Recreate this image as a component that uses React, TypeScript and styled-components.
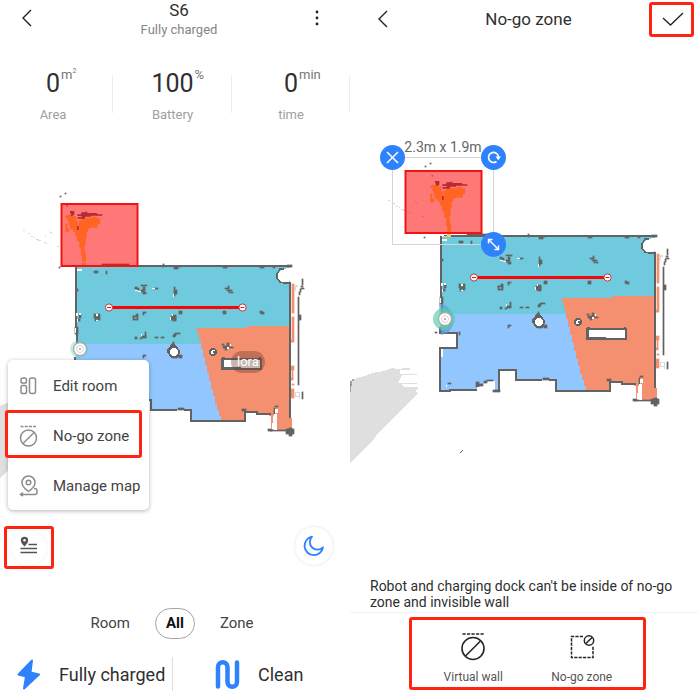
import React from "react";
import styled, { createGlobalStyle, css } from "styled-components";

const GlobalStyle = createGlobalStyle`
  *, *::before, *::after { box-sizing: border-box; }
  body {
    margin: 0;
    background: #fff;
    color: #2f2f2f;
    font-family: Roboto, "Liberation Sans", sans-serif;
  }
  button { font: inherit; color: inherit; border: 0; padding: 0; margin: 0; background: none; cursor: pointer; }
  h1, p, dl, dd, dt { margin: 0; }
  svg { display: block; }
`;

const RED = "#ff2412";
const BLUE = "#2e82fb";

const Screens = styled.main`
  display: grid;
  grid-template-columns: minmax(0, 350fr) minmax(0, 348fr);
  min-height: 100vh;
`;

const Screen = styled.section`
  display: flex;
  flex-direction: column;
  min-width: 0;
`;

const Header = styled.header`
  display: grid;
  align-items: center;
  height: 40px;
  flex: none;
`;

const HomeHeader = styled(Header)`
  grid-template-columns: 54px 1fr 54px;
  padding-right: 6px;
`;

const ConfirmHeader = styled(Header)`
  grid-template-columns: 66px 1fr 45px;
  padding-right: 4px;
  padding-bottom: 2px;
`;

const IconButton = styled.button`
  display: flex;
  align-items: center;
  justify-content: center;
  height: 36px;
`;

const HomeIconButton = styled(IconButton)`
  padding-bottom: 4px;
`;

const TitleBlock = styled.div`
  padding-left: 14px;
  text-align: center;
`;

const Title = styled.h1<{ $inset?: boolean }>`
  font-size: 17px;
  font-weight: 400;
  line-height: 20px;
  text-align: center;
  padding-right: ${(p) => (p.$inset ? 8 : 0)}px;
`;

const Subtitle = styled.p`
  font-size: 13px;
  line-height: 20px;
  color: #858585;
`;

const redFrame = css`
  border: 3px solid ${RED};
  border-radius: 3px;
`;

const ConfirmButton = styled.button`
  ${redFrame}
  display: flex;
  align-items: center;
  justify-content: center;
  width: 45px;
  height: 35px;
  padding-left: 3px;
`;

const Stats = styled.dl`
  display: grid;
  grid-template-columns: 113fr 119fr 118fr;
  margin-top: 28px;
  flex: none;
`;

const Stat = styled.div<{ $first?: boolean }>`
  display: flex;
  flex-direction: column-reverse;
  align-items: center;
  padding-right: ${(p) => (p.$first ? 7 : 0)}px;
  background: linear-gradient(#ececec, #ececec) right 7px / 1px 38px no-repeat;
`;

const StatLabel = styled.dt`
  font-size: 13px;
  line-height: 16px;
  margin-top: 8px;
  color: #a0a0a0;
`;

const StatValue = styled.dd`
  position: relative;
  font-size: 25px;
  line-height: 31px;
`;

const Unit = styled.sup`
  position: absolute;
  left: 100%;
  top: 0;
  padding-left: 1px;
  font-size: 13px;
  line-height: 13px;
  color: #777;
  sup { font-size: 7px; line-height: 1; vertical-align: 6px; }
`;

const Stage = styled.div`
  position: relative;
  flex: 1;
`;

const MapSvg = styled.svg`
  width: 100%;
  height: auto;
`;

const Menu = styled.ul`
  position: absolute;
  left: 8px;
  bottom: 82px;
  width: 141px;
  margin: 0;
  padding: 0;
  list-style: none;
  background: #fff;
  border-radius: 5px;
  box-shadow: 0 1px 4px rgba(0, 0, 0, 0.3);
`;

const MenuItem = styled.li<{ $marked?: boolean }>`
  position: relative;
  & + &::before {
    content: "";
    position: absolute;
    top: 0;
    left: 14px;
    right: 0;
    height: 1px;
    background: #ececec;
  }
  ${(p) =>
    p.$marked &&
    css`
      &::after {
        content: "";
        position: absolute;
        inset: 0 7px 2px -3px;
        ${redFrame}
        pointer-events: none;
      }
    `}
`;

const MenuButton = styled.button`
  display: flex;
  align-items: center;
  gap: 14px;
  width: 100%;
  height: 50px;
  padding: 1px 0 0 10px;
  font-size: 15px;
  color: #444;
  white-space: nowrap;
`;

const LayersMark = styled.div`
  ${redFrame}
  position: absolute;
  left: 4px;
  bottom: 23px;
  width: 50px;
  height: 43px;
  display: flex;
  align-items: center;
  justify-content: center;
`;

const RoundButton = styled.button`
  display: flex;
  align-items: center;
  justify-content: center;
  width: 38px;
  height: 38px;
  flex: none;
  border-radius: 50%;
  background: #fff;
  box-shadow: 0 0 3px rgba(0, 0, 0, 0.14);
`;

const LayersButton = styled(RoundButton)`
  width: 36px;
  height: 36px;
  padding-bottom: 6px;
  box-shadow: 0 0 1px rgba(0, 0, 0, 0.14);
`;

const NightButton = styled(RoundButton)`
  position: absolute;
  right: 17px;
  bottom: 27px;
`;

const RoomTag = styled.span`
  position: absolute;
  left: 66%;
  top: 228px;
  padding: 0 6px;
  border-radius: 11px;
  background: rgba(110, 60, 45, 0.38);
  color: #fff;
  font-size: 13px;
  line-height: 22px;
`;

const Tabs = styled.div`
  display: flex;
  justify-content: center;
  align-items: center;
  gap: 25px;
  height: 31px;
  margin-top: 16px;
  padding-right: 6px;
  flex: none;
`;

const Tab = styled.button<{ $active?: boolean }>`
  font-size: 15px;
  line-height: 29px;
  color: #444;
  ${(p) =>
    p.$active &&
    css`
      width: 40px;
      border: 1px solid #a5a5a5;
      border-radius: 16px;
      font-weight: 700;
      color: #111;
    `}
`;

const Actions = styled.div`
  display: grid;
  grid-template-columns: 172fr 178fr;
  height: 34px;
  margin: 18px 0 7px;
  flex: none;
`;

const Action = styled.button<{ $inset: number }>`
  display: flex;
  align-items: center;
  gap: 18px;
  padding-left: ${(p) => p.$inset}px;
  font-size: 18px;
  white-space: nowrap;
  & + & { border-left: 1px solid #ddd; }
`;

const Selection = styled.div`
  position: absolute;
  left: 42px;
  top: 117px;
  width: 102px;
  height: 88px;
  border: 1px solid #d3d5da;
`;

const SelectionSize = styled.span`
  position: absolute;
  left: 0;
  right: 0;
  bottom: 100%;
  padding-bottom: 2px;
  font-size: 14px;
  line-height: 18px;
  text-align: center;
  color: #666;
  white-space: nowrap;
`;

const Handle = styled.button<{ $corner: "close" | "rotate" | "resize" }>`
  position: absolute;
  display: flex;
  align-items: center;
  justify-content: center;
  width: 25px;
  height: 25px;
  border-radius: 50%;
  background: ${BLUE};
  ${(p) => (p.$corner === "close" ? "left: -13px;" : "right: -13px;")}
  ${(p) => (p.$corner === "resize" ? "bottom: -13px;" : "top: -13px;")}
`;

const Note = styled.p`
  padding: 0 20px;
  font-size: 14px;
  line-height: 16px;
  flex: none;
`;

const ToolBar = styled.div`
  margin-top: 2px;
  padding: 4px 52px 8px 59px;
  border-top: 1px solid #f1f1f1;
  flex: none;
`;

const ToolFrame = styled.div`
  ${redFrame}
  display: grid;
  grid-template-columns: 1fr 1fr;
  padding: 0 7px;
  height: 73px;
`;

const Tool = styled.button`
  display: flex;
  flex-direction: column;
  align-items: center;
  gap: 8px;
  padding-top: 12px;
  font-size: 12px;
  line-height: 16px;
  color: #555;
`;

type Box = [number, number, number, number];

const WALL = "#636363";

const wallSpecks: Box[] = [
  [109, 241, 4, 2], [121, 241, 1, 3], [117, 234, 27, 2], [150, 257, 2, 2], [152, 258, 2, 2],
  [156, 255, 6, 1], [158, 257, 2, 4], [156, 260, 3, 2], [158, 262, 3, 2], [170, 258, 3, 1],
  [189, 257, 1, 9], [190, 260, 2, 4], [92, 259, 1, 2], [158, 282, 3, 1], [158, 283, 1, 2],
  [194, 281, 3, 3], [148, 286, 5, 1], [148, 286, 1, 4], [152, 287, 1, 3], [149, 289, 3, 1],
  [151, 284, 2, 2], [186, 286, 5, 4], [188, 285, 3, 6], [109, 284, 2, 4], [110, 287, 3, 2],
  [113, 284, 2, 6], [110, 289, 1, 2], [94, 285, 2, 3], [93, 289, 2, 2], [90, 297, 3, 7],
  [189, 304, 2, 2], [190, 303, 5, 1], [188, 305, 2, 2], [160, 302, 1, 5], [157, 306, 4, 2],
  [155, 308, 2, 1], [150, 307, 2, 2], [170, 307, 3, 1], [176, 307, 3, 1], [188, 312, 1, 5],
  [194, 325, 3, 3], [188, 326, 4, 2], [158, 325, 3, 1], [158, 326, 1, 2], [109, 332, 1, 3],
  [178, 234, 1, 3], [189, 237, 4, 2], [193, 236, 3, 1], [238, 236, 4, 2], [275, 236, 4, 2],
  [288, 236, 2, 2], [302, 235, 5, 2], [240, 258, 4, 1], [243, 256, 1, 3], [242, 260, 5, 1],
  [244, 261, 1, 2], [246, 262, 2, 1], [238, 281, 3, 3], [275, 281, 2, 2], [276, 282, 3, 2],
  [238, 316, 5, 2], [242, 313, 2, 4], [240, 318, 2, 2], [244, 317, 4, 1], [237, 314, 2, 1],
  [313, 267, 1, 88], [314, 285, 2, 5], [317, 249, 1, 6], [316, 256, 2, 1], [315, 259, 1, 3],
  [314, 262, 1, 3], [317, 362, 1, 7], [316, 258, 3, 1], [301, 399, 8, 5], [304, 398, 3, 8],
  [285, 400, 16, 1], [283, 399, 4, 2], [289, 378, 1, 8], [290, 376, 3, 1], [257, 379, 4, 2],
  [126, 382, 3, 5], [129, 384, 4, 2], [134, 381, 3, 2], [137, 380, 6, 1], [143, 390, 7, 2],
  [98, 383, 3, 1], [193, 378, 6, 2], [90, 331, 3, 1], [85, 332, 2, 1], [75, 166, 1, 1],
  [80, 163, 1, 1], [74, 237, 1, 1],
];

const clearSpecks: Box[] = [
  [92, 239, 5, 2], [91, 283, 2, 3], [94, 283, 2, 2], [92, 289, 1, 3], [111, 284, 2, 2],
  [111, 290, 2, 1], [153, 261, 3, 1], [167, 258, 3, 1], [150, 260, 3, 1], [188, 264, 1, 3],
  [187, 284, 1, 2], [185, 287, 1, 3], [156, 304, 1, 2], [91, 349, 2, 8], [96, 385, 1, 2],
  [289, 384, 3, 16], [287, 396, 3, 3], [290, 379, 3, 4], [242, 317, 2, 2], [245, 314, 1, 2],
  [90, 298, 1, 5], [127, 387, 6, 4], [134, 384, 8, 6],
];

const roomSlivers: Box[] = [
  [307, 254, 2, 29], [307, 287, 2, 25], [305, 310, 3, 2], [306, 336, 3, 4], [307, 340, 1, 9],
  [306, 348, 2, 2], [307, 354, 2, 1], [305, 359, 4, 9],
];

const lightSpecks: Box[] = [
  [309, 255, 4, 2], [309, 257, 2, 4], [310, 362, 5, 1], [310, 363, 1, 4], [314, 363, 1, 6],
  [311, 366, 3, 1], [38, 200, 2, 1], [43, 203, 2, 1], [46, 206, 2, 1], [49, 207, 1, 1],
  [51, 209, 3, 1], [53, 210, 3, 1], [60, 206, 1, 1], [59, 212, 2, 1], [61, 213, 1, 1],
  [64, 200, 1, 1], [65, 202, 2, 1], [67, 203, 1, 1], [72, 216, 2, 1],
];

function Specks({ boxes, fill, heavy = false }: { boxes: Box[]; fill: string; heavy?: boolean }) {
  return (
    <g
      fill={fill}
      stroke={heavy ? fill : "none"}
      strokeWidth={0.7}
      shapeRendering={heavy ? "auto" : "crispEdges"}
    >
      {boxes.map(([x, y, w, h], i) => (
        <rect key={i} x={x} y={y} width={w} height={h} />
      ))}
    </g>
  );
}

/* Soot-like traces the robot scanned inside the blocked area. */
function Traces() {
  return (
    <g transform="translate(20 130) scale(0.3333)">
      <path
        fill="#ff6422"
        stroke="#ff6422"
        strokeWidth={2}
        d="M188 165H205V170H213V185H217V205H222V183H230V175H262V171H274V176H284V192H277V202H262V198H258V204H249V214H244V232H241V255H238V280H242V305H233V288H229V262H224V243H217V226H211V214H205V207H197V197H193V182H188ZM182 192H186V216H182ZM182 168H188V172H182ZM188 206H192V216H188Z"
      />
      <path
        fill="#b52b31"
        d="M195 153H208V165H203V168H198V160H195ZM217 163H229V157H240V155H247V159H276V163H292V167H258V170H240V176H218V171H230V168H217ZM216 198H221V210H216ZM185 135H188V140H185Z"
      />
    </g>
  );
}

function WallEnd({ x }: { x: number }) {
  return (
    <g shapeRendering="auto">
      <circle cx={x} cy={277.5} r={3.6} fill="#fff" stroke="#cf3434" strokeWidth={1} />
      <path d={`M${x - 2} 277.5h4`} stroke="#d42020" strokeWidth={1} />
    </g>
  );
}

function FloorPlan({ active }: { active: boolean }) {
  return (
    <g shapeRendering="crispEdges">
      <path
        fill="#dfdfdf"
        d="M0 381 7 378 15 376 22 373 34 371 42 368 47 369 56 368H60V370H50V374H67V375H52L49 381 47 383H67V384H51L54 387H68V389L65 391 68 393 66 396 28 433 24 439 0 463Z"
      />
      <path fill="#6fcadd" d="M91 237H305V298H218V314H91V237Z" />
      <path
        fill="#91c6ff"
        d="M91 314H220L240 391H207V380H166V370H149V391H145V381H134V384H127V390H90V348H107V333H91Z"
      />
      <path
        fill="#f48f70"
        d="M212 298H262V296H305V388H307V400H292V386L290 377 288 388 287 398H286V386L276 384 260 382V391H236V386H234V380H232V374H230V366H228V359H226V351H224V343H222V335H220V327H218V319H216V310H214V303H212Z"
      />
      <Specks boxes={roomSlivers} fill="#f48f70" heavy />
      <Specks boxes={lightSpecks} fill="#dadada" />
      <path
        d="M91 236V301M92 304V313M90 327V333H107V348H90V391H100V390H127M148 391H149V370H166V380H192M199 380H206V391H260V382H272V384H286M305 388V252M94 236H303"
        fill="none"
        stroke={WALL}
        strokeWidth={1.6}
      />
      <path d="M93 237H101V233H97V236H93Z" fill="#ffc94d" />
      <circle cx={300} cy={246} r={7} fill="#fff" />
      <rect x={301} y={238} width={7} height={13} fill="#fff" />
      <path d="M299 239H295L292 244V248L295 252 299 253H304" fill="none" stroke={WALL} strokeWidth={1.6} />
      <Specks boxes={wallSpecks} fill={WALL} heavy />
      <Specks boxes={clearSpecks} fill="#fff" />
      <path d="M188 313 195 321 193 327H186L182 321Z" fill={WALL} stroke={WALL} />
      <circle cx={189} cy={322} r={4} fill="#fff" />
      <circle cx={228} cy={322} r={3} fill="#fff" stroke={WALL} strokeWidth={2} />
      <rect x={228} y={321} width={3} height={2} fill={WALL} />
      <path d="M236 328H277V340H236Z" fill={WALL} />
      <path d="M239 330H275V338H256V337H239Z" fill="#fff" />
      <rect x={237} y={327} width={3} height={2} fill={WALL} />
      <rect x={274} y={327} width={2} height={2} fill={WALL} />
      <g shapeRendering="auto">
        {active && <path d="M89 303Q103 307 103 320T91 335Z" fill="#5d9fd4" opacity={0.75} />}
        <circle cx={94} cy={319} r={active ? 11 : 9} fill="#57cda4" opacity={active ? 0.65 : 0.35} />
        <circle cx={95} cy={319} r={6.5} fill="#fff" stroke="#aaa" strokeWidth={1.3} />
        <circle cx={95} cy={319} r={3.5} fill="none" stroke="#d2d2d2" />
        <circle cx={95} cy={319} r={1} fill="#999" />
      </g>
      <path d="M124 277.5H258" stroke="#fa0505" strokeWidth={3} />
      <WallEnd x={124} />
      <WallEnd x={257.5} />
      <path d="M109 453h2v-2h2v-1h-1v2h-2Z" fill={WALL} />
    </g>
  );
}

function HomeMap() {
  return (
    <MapSvg viewBox="0 123 350 466" role="img" aria-label="Cleaning map">
      <g transform="translate(-15 30)">
        <FloorPlan active={false} />
      </g>
      <rect x={61.5} y={204} width={76} height={62} fill="#ff0000" fillOpacity={0.53} stroke="#f01414" strokeWidth={2} />
      <g transform="translate(-15 30)">
        <Traces />
      </g>
    </MapSvg>
  );
}

function EditMap() {
  return (
    <MapSvg viewBox="0 40 348 538" role="img" aria-label="Editable map">
      <FloorPlan active />
      <path d="M0 384V392M1 386V381M3 381V379" stroke="#666" />
      <rect x={55.5} y={171} width={76} height={62} fill="#ff0000" fillOpacity={0.53} stroke="#f01414" strokeWidth={2} />
      <Traces />
    </MapSvg>
  );
}

const BackIcon = () => (
  <svg width="10" height="18" viewBox="0 0 10 18" fill="none" stroke="#222" strokeWidth="1.4">
    <path d="M9 1 1 9l8 8" />
  </svg>
);

const MoreIcon = () => (
  <svg width="4" height="16" viewBox="0 0 4 16" fill="#222">
    <circle cx="2" cy="2" r="1.4" />
    <circle cx="2" cy="8" r="1.4" />
    <circle cx="2" cy="14" r="1.4" />
  </svg>
);

const CheckIcon = () => (
  <svg width="22" height="14" viewBox="0 0 22 14" fill="none" stroke="#222" strokeWidth="1.3">
    <path d="m1 6 7.500 7L21 1" />
  </svg>
);

const RoomsIcon = () => (
  <svg width="21" height="20" viewBox="0 0 21 20" fill="none" stroke="#8c8c8c" strokeWidth="1.5">
    <rect x="3" y="2" width="5.500" height="5" rx="1.800" />
    <rect x="3" y="9.500" width="5.500" height="8" rx="1.800" />
    <rect x="11.500" y="2" width="6" height="15.500" rx="2" />
  </svg>
);

const BlockedIcon = () => (
  <svg width="21" height="24" viewBox="0 0 21 24" fill="none" stroke="#8c8c8c" strokeWidth="1.5">
    <path d="M2.500 2.500H18" strokeDasharray="3 1.200" />
    <circle cx="10.500" cy="14" r="8" />
    <path d="m5 19.500 11-11" />
  </svg>
);

const MapPinIcon = () => (
  <svg width="21" height="22" viewBox="0 0 21 22" fill="none" stroke="#8c8c8c" strokeWidth="1.500">
    <path d="M10.500 16.500C7 14 4 11 4 7.500a6.500 6.500 0 0 1 13 0c0 3.500-3 6.500-6.500 9Z" />
    <circle cx="10.500" cy="7.500" r="2.300" />
    <path d="M16 13.500h1a2.500 2.500 0 0 1 2 2.500v1.500a2 2 0 0 1-2 2H3M5 17.500l-2.500 2 2.500 1.500" />
  </svg>
);

const LayersIcon = () => (
  <svg width="18" height="18" viewBox="0 0 18 18" fill="none" stroke="#555" strokeWidth="1.500">
    <path d="M8.500 8.500H17M.5 12.500H17M.5 16.500H17" />
    <path d="M4.500 10.500C2.500 8.300.8 6.500.8 4.500a3.700 3.700 0 0 1 7.400 0c0 2-1.700 3.800-3.700 6Z" fill="#555" stroke="none" />
    <circle cx="4.500" cy="4.300" r="1.200" fill="#fff" stroke="none" />
  </svg>
);

const MoonIcon = () => (
  <svg width="22" height="22" viewBox="0 0 22 22" fill="none" stroke={BLUE} strokeWidth="1.800" strokeLinejoin="round">
    <path d="M9 1.700a9.300 9.300 0 1 0 11 10.600A7.600 7.600 0 0 1 9 1.700Z" />
  </svg>
);

const BoltIcon = () => (
  <svg width="24" height="31" viewBox="0 0 24 31" fill={BLUE} stroke={BLUE} strokeWidth="2" strokeLinejoin="round">
    <path d="M15 1.500 1.500 15.500l7.500 2-2 12L22 15.500l-8.500-2Z" />
  </svg>
);

const PathIcon = () => (
  <svg width="25" height="31" viewBox="0 0 25 31" fill="none" stroke={BLUE} strokeWidth="4.500" strokeLinecap="round">
    <path d="M3 27.500V8a4.700 4.700 0 0 1 9.500 0v15a4.700 4.700 0 0 0 9.500 0V3.500" />
  </svg>
);

const CloseIcon = () => (
  <svg width="13" height="13" viewBox="0 0 13 13" stroke="#fff" strokeWidth="1.500">
    <path d="m1 1 11 11M12 1 1 12" />
  </svg>
);

const RotateIcon = () => (
  <svg width="15" height="15" viewBox="0 0 15 15" fill="none" stroke="#fff" strokeWidth="1.700">
    <path d="M10.500 11.500a5 5 0 1 1 2-4.500" />
    <path d="M9.500 6.500h5.500l-2.700 3.700Z" fill="#fff" stroke="none" />
  </svg>
);

const ResizeIcon = () => (
  <svg width="13" height="13" viewBox="0 0 13 13" fill="none" stroke="#fff" strokeWidth="1.400">
    <path d="m1.500 1.500 10 10M1.500 5.500v-4h4M11.500 7.500v4h-4" />
  </svg>
);

const VirtualWallIcon = () => (
  <svg width="26" height="29" viewBox="0 0 26 29" fill="none" stroke="#262626" strokeWidth="1.600">
    <path d="M2.500 2H24" strokeDasharray="3.200 1.300" />
    <circle cx="13" cy="16.500" r="11" />
    <path d="M5.500 24 20.500 9" />
  </svg>
);

const ZoneIcon = () => (
  <svg width="26" height="29" viewBox="0 0 26 29" fill="none" stroke="#262626" strokeWidth="1.500">
    <path d="M14 4.500H2.500V25.500H24V14" strokeDasharray="3.200 1.200" />
    <circle cx="20" cy="8.500" r="4.700" />
    <path d="m16.700 11.800 6.600-6.600" />
  </svg>
);

export default function App() {
  return (
    <>
      <GlobalStyle />
      <Screens>
        <Screen>
          <HomeHeader>
            <HomeIconButton aria-label="Back"><BackIcon /></HomeIconButton>
            <TitleBlock>
              <Title>S6</Title>
              <Subtitle>Fully charged</Subtitle>
            </TitleBlock>
            <HomeIconButton aria-label="More"><MoreIcon /></HomeIconButton>
          </HomeHeader>
          <Stats>
            <Stat $first>
              <StatLabel>Area</StatLabel>
              <StatValue>0<Unit>m<sup>2</sup></Unit></StatValue>
            </Stat>
            <Stat>
              <StatLabel>Battery</StatLabel>
              <StatValue>100<Unit>%</Unit></StatValue>
            </Stat>
            <Stat>
              <StatLabel>time</StatLabel>
              <StatValue>0<Unit>min</Unit></StatValue>
            </Stat>
          </Stats>
          <Stage>
            <HomeMap />
            <RoomTag>lora</RoomTag>
            <Menu>
              <MenuItem><MenuButton><RoomsIcon />Edit room</MenuButton></MenuItem>
              <MenuItem $marked><MenuButton><BlockedIcon />No-go zone</MenuButton></MenuItem>
              <MenuItem><MenuButton><MapPinIcon />Manage map</MenuButton></MenuItem>
            </Menu>
            <LayersMark>
              <LayersButton aria-label="Map options"><LayersIcon /></LayersButton>
            </LayersMark>
            <NightButton aria-label="Do not disturb"><MoonIcon /></NightButton>
          </Stage>
          <Tabs>
            <Tab>Room</Tab>
            <Tab $active>All</Tab>
            <Tab>Zone</Tab>
          </Tabs>
          <Actions>
            <Action $inset={17}><BoltIcon />Fully charged</Action>
            <Action $inset={42}><PathIcon />Clean</Action>
          </Actions>
        </Screen>
        <Screen>
          <ConfirmHeader>
            <IconButton aria-label="Back"><BackIcon /></IconButton>
            <Title $inset>No-go zone</Title>
            <ConfirmButton aria-label="Confirm"><CheckIcon /></ConfirmButton>
          </ConfirmHeader>
          <Stage>
            <EditMap />
            <Selection>
              <SelectionSize>2.3m x 1.9m</SelectionSize>
              <Handle $corner="close" aria-label="Remove zone"><CloseIcon /></Handle>
              <Handle $corner="rotate" aria-label="Rotate zone"><RotateIcon /></Handle>
              <Handle $corner="resize" aria-label="Resize zone"><ResizeIcon /></Handle>
            </Selection>
          </Stage>
          <Note>Robot and charging dock can't be inside of no-go zone and invisible wall</Note>
          <ToolBar>
            <ToolFrame>
              <Tool><VirtualWallIcon />Virtual wall</Tool>
              <Tool><ZoneIcon />No-go zone</Tool>
            </ToolFrame>
          </ToolBar>
        </Screen>
      </Screens>
    </>
  );
}
